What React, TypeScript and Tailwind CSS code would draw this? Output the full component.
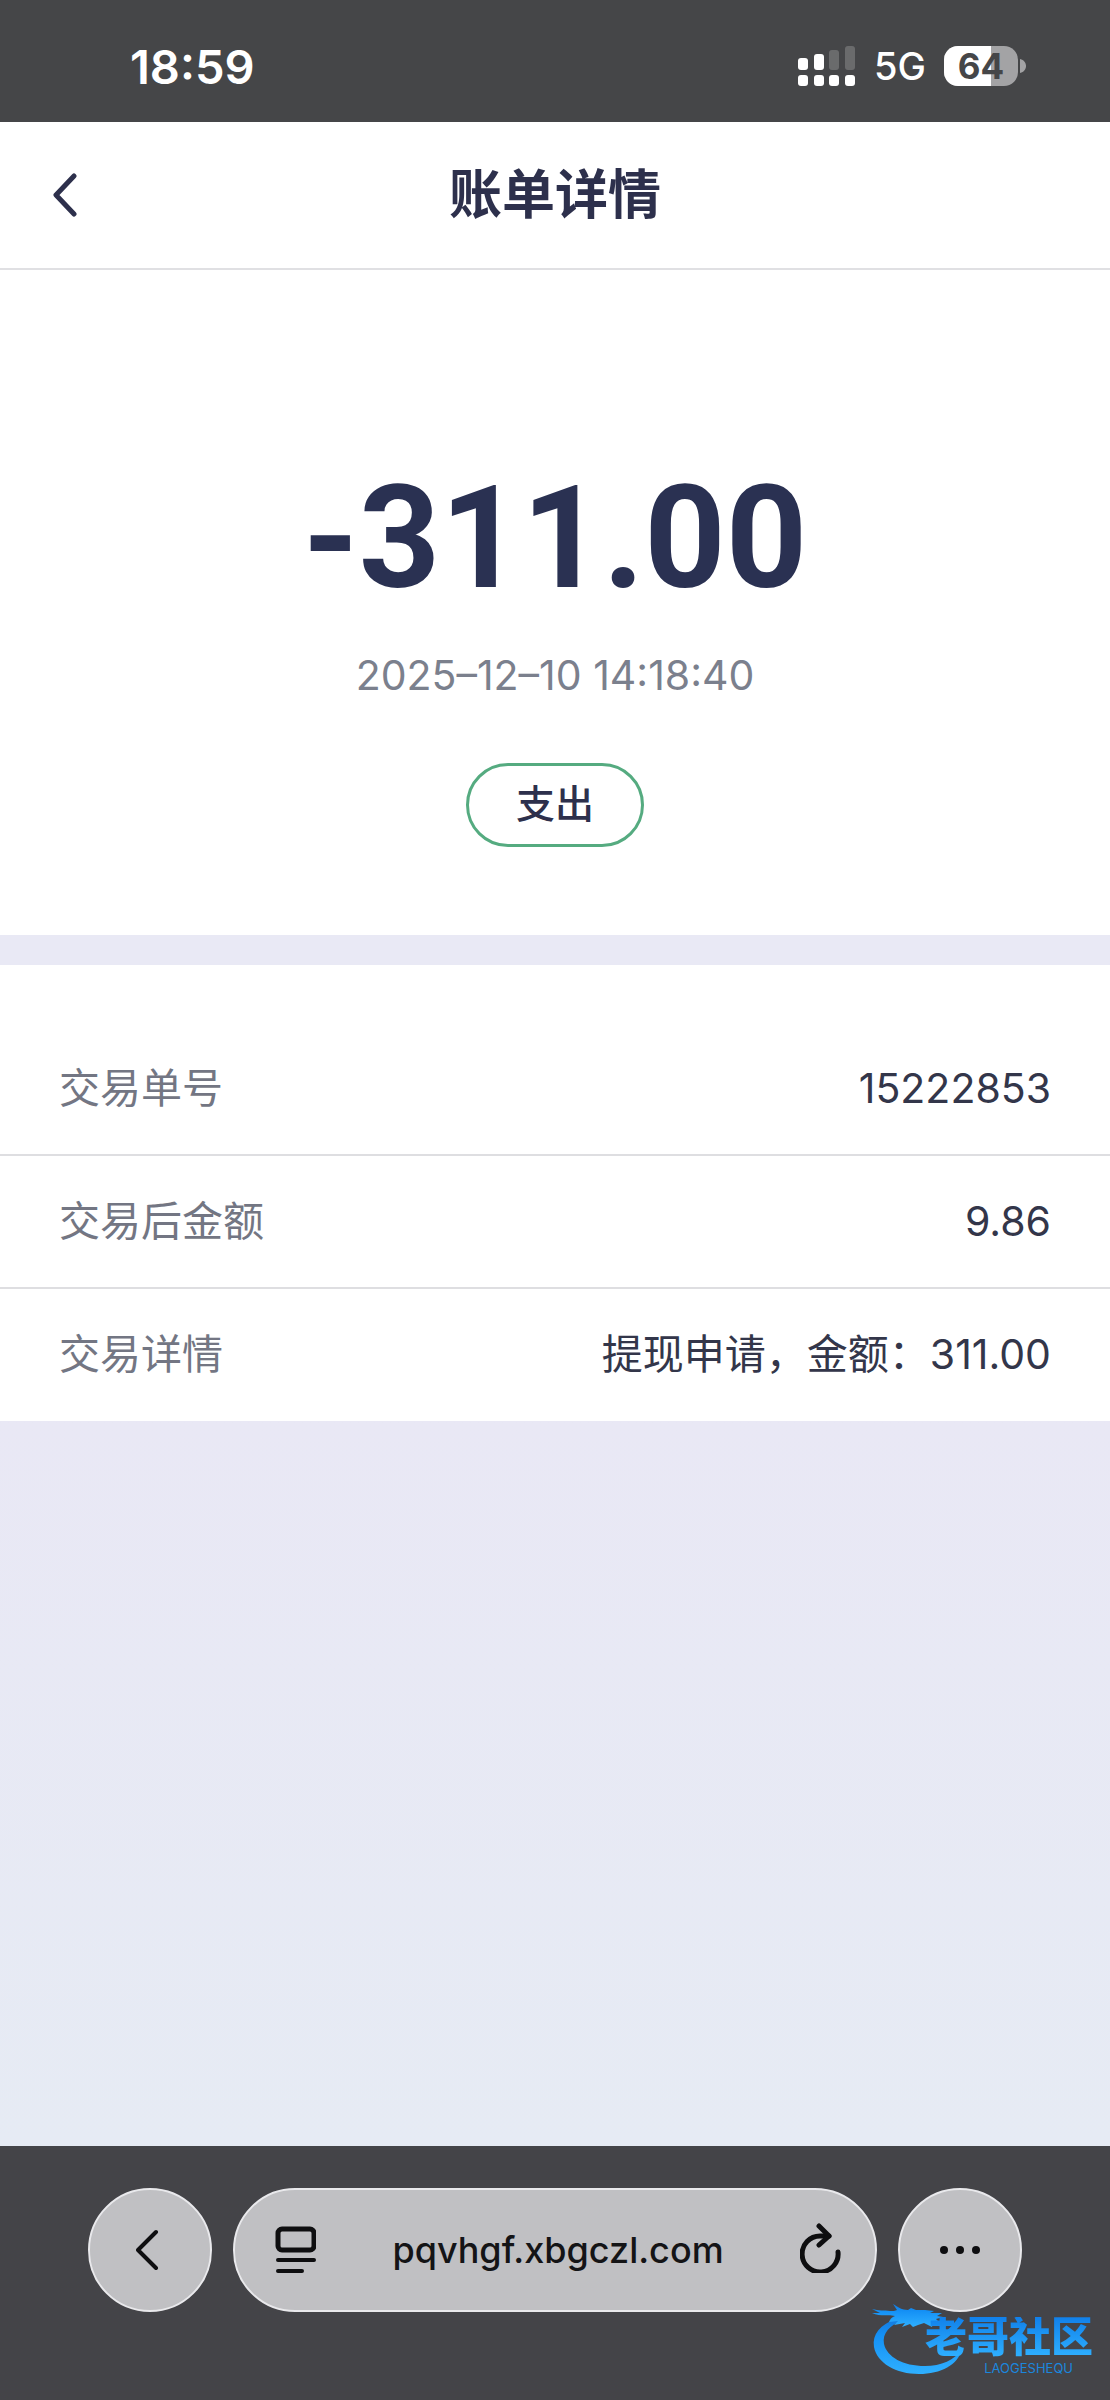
import { useState } from "react";

type Detail = {
  label: string;
  value: string;
};

const bill = {
  amount: "-311.00",
  date: "2025–12–10 14:18:40",
  type: "支出",
};

const details: Detail[] = [
  { label: "交易单号", value: "15222853" },
  { label: "交易后金额", value: "9.86" },
  { label: "交易详情", value: "提现申请，金额：311.00" },
];

const SignalIcon = () => (
  <svg width="58" height="41" viewBox="0 0 58 41" fill="white">
    <rect x="0" y="12" width="10" height="12" rx="3" />
    <rect x="16" y="8" width="10" height="16" rx="3" />
    <rect x="31" y="4" width="10" height="20" rx="3" opacity="0.2" />
    <rect x="47" y="0" width="10" height="24" rx="3" opacity="0.2" />
    <rect x="0" y="29" width="10" height="11" rx="3" />
    <rect x="16" y="29" width="10" height="11" rx="3" />
    <rect x="31" y="29" width="10" height="11" rx="3" />
    <rect x="47" y="29" width="10" height="11" rx="3" />
  </svg>
);

const Battery = ({ level }: { level: number }) => (
  <div className="flex items-center gap-[2px]">
    <div className="relative flex h-10 w-[74px] items-center justify-center overflow-hidden rounded-[14px] bg-[#a3a3a5]">
      <div
        className="absolute inset-y-0 left-0 bg-white"
        style={{ width: `${level}%` }}
      />
      <span className="relative text-[35px] leading-10 font-bold text-[#454648]">
        {level}
      </span>
    </div>
    <svg width="6" height="14" viewBox="0 0 6 14" fill="#a3a3a5">
      <path d="M0 0c4 1 6 4 6 7s-2 6-6 7z" />
    </svg>
  </div>
);

const StatusBar = () => (
  <div className="flex h-[122px] items-center justify-between bg-[#454648] pt-[10px] pr-[84px] pl-[130px] text-white">
    <span className="text-[47px] leading-none font-semibold">18:59</span>
    <div className="flex items-center gap-[18px]">
      <SignalIcon />
      <span className="text-[38px] leading-none font-medium">5G</span>
      <Battery level={64} />
    </div>
  </div>
);

const Header = () => (
  <header className="grid h-[148px] grid-cols-[1fr_auto_1fr] items-center border-b-2 border-[#e0e0e3] bg-white">
    <button type="button" aria-label="返回" className="ml-[51px] w-7">
      <svg width="28" height="44" viewBox="0 0 28 44" fill="none">
        <path
          d="M23 3 5 22l18 19"
          stroke="#2d304c"
          strokeWidth="5"
          strokeLinecap="round"
          strokeLinejoin="round"
        />
      </svg>
    </button>
    <h1 className="text-[53px] leading-none font-bold">账单详情</h1>
  </header>
);

const DetailRow = ({ label, value }: Detail) => (
  <div className="flex h-[133px] items-center justify-between border-b-2 border-[#dedee1] px-[59px] text-[41px] last:h-[132px] last:border-b-0">
    <dt className="text-[#737683]">{label}</dt>
    <dd className="text-[#33364a]">{value}</dd>
  </div>
);

const Watermark = () => (
  <div className="absolute right-[17px] bottom-5 flex h-[76px] w-[221px] flex-col items-end">
    <svg
      className="absolute top-0 left-0"
      width="94"
      height="72"
      viewBox="0 0 94 72"
    >
      <defs>
        <linearGradient id="dragon" x1="0" y1="0" x2="0" y2="1">
          <stop offset="0" stopColor="#1478dc" />
          <stop offset="0.3" stopColor="#1490f5" />
          <stop offset="1" stopColor="#2fb0ff" />
        </linearGradient>
      </defs>
      <g fill="url(#dragon)">
        <path d="M25 14C8 21 0 30 2 43c3 16 22 27 45 27 22 0 39-9 43-25-7 11-21 17-37 17-22 0-38-9-41-22-2-11 6-19 19-24z" />
        <path d="M0 5c7 2 12 1 18 2 3 0 5 0 7-1l-4-6c5 3 9 6 15 6l3-2 5 2h9l9 1-4 2 12 0-5 3 6 1-7 2 5 5-8-2-1 5-8-4-6 2-5 2-3-3-8 3 3-4-11 2 4-4-9 1c1-3 3-5 6-6-6-2-14 1-23-3l8 0z" />
      </g>
    </svg>
    <span className="relative mt-[13px] bg-linear-to-b from-[#1180ea] to-[#2fb0ff] bg-clip-text text-[42px] leading-10 font-black text-transparent">
      老哥社区
    </span>
    <span className="relative mt-[5px] mr-5 text-[13px] leading-[13px] text-[#1b86dd]">
      LAOGESHEQU
    </span>
  </div>
);

const BrowserBar = () => {
  const [url, setUrl] = useState("pqvhgf.xbgczl.com");

  return (
    <footer className="relative flex h-[254px] items-start gap-[21px] bg-[#444448] px-[88px] pt-[42px]">
      <button
        type="button"
        aria-label="后退"
        className="flex size-[124px] shrink-0 items-center justify-center rounded-full border-2 border-[#e9e9ec] bg-[#c0c0c3]"
      >
        <svg width="28" height="42" viewBox="0 0 28 42" fill="none">
          <path
            d="M20 3 2 21l18 18"
            stroke="#0e0e10"
            strokeWidth="4"
            strokeLinecap="round"
            strokeLinejoin="round"
          />
        </svg>
      </button>
      <div className="flex h-[124px] min-w-0 flex-1 items-center justify-between rounded-full border-2 border-[#e9e9ec] bg-[#c0c0c3] pr-8 pl-10">
        <button type="button" aria-label="页面菜单">
          <svg
            width="41"
            height="48"
            viewBox="0 0 41 48"
            fill="none"
            stroke="#0e0e10"
            strokeWidth="4"
            strokeLinecap="round"
          >
            <rect x="3" y="3" width="36" height="21" rx="4" strokeWidth="5" />
            <path d="M3 34h36M3 45h24" />
          </svg>
        </button>
        <input
          type="text"
          aria-label="网址"
          value={url}
          onChange={(e) => setUrl(e.target.value)}
          className="w-0 min-w-0 flex-1 bg-transparent text-center text-[36px] font-medium text-[#141416] outline-none"
        />
        <button type="button" aria-label="刷新" className="pb-1">
          <svg
            width="43"
            height="50"
            viewBox="0 0 43 50"
            fill="none"
            stroke="#0e0e10"
            strokeWidth="5"
            strokeLinecap="round"
            strokeLinejoin="round"
          >
            <path d="M38 29A18 18 0 1 1 20 13h9" />
            <path d="M19 3l10 10-10 9" />
          </svg>
        </button>
      </div>
      <button
        type="button"
        aria-label="更多"
        className="flex size-[124px] shrink-0 items-center justify-center rounded-full border-2 border-[#e9e9ec] bg-[#c0c0c3]"
      >
        <svg width="42" height="10" viewBox="0 0 42 10" fill="#0e0e10">
          <circle cx="5" cy="5" r="4" />
          <circle cx="21" cy="5" r="4" />
          <circle cx="37" cy="5" r="4" />
        </svg>
      </button>
      <Watermark />
    </footer>
  );
};

const App = () => {
  return (
    <div className="flex min-h-screen flex-col bg-[#e9e9f5] font-['Inter','Noto_Sans_CJK_SC',sans-serif] text-[#2d304c]">
      <StatusBar />
      <Header />

      <section className="flex flex-col items-center bg-white pt-[198px] pb-[88px]">
        <p className="font-['Roboto',sans-serif] text-[142px] leading-[142px] font-bold text-[#2a3152]">
          {bill.amount}
        </p>
        <p className="mt-10 text-[41px] leading-[50px] text-[#7b808d]">
          {bill.date}
        </p>
        <span className="mt-[63px] flex h-[84px] w-[178px] items-center justify-center rounded-full border-[3px] border-[#55ab80] pb-1 text-[39px] leading-none font-medium">
          {bill.type}
        </span>
      </section>

      <dl className="mt-[30px] bg-white pt-[58px]">
        {details.map((detail) => (
          <DetailRow key={detail.label} {...detail} />
        ))}
      </dl>

      <div className="flex-1 bg-linear-to-b from-[#e9e8f5] to-[#e6ebf4]" />
      <BrowserBar />
    </div>
  );
};

export default App;
